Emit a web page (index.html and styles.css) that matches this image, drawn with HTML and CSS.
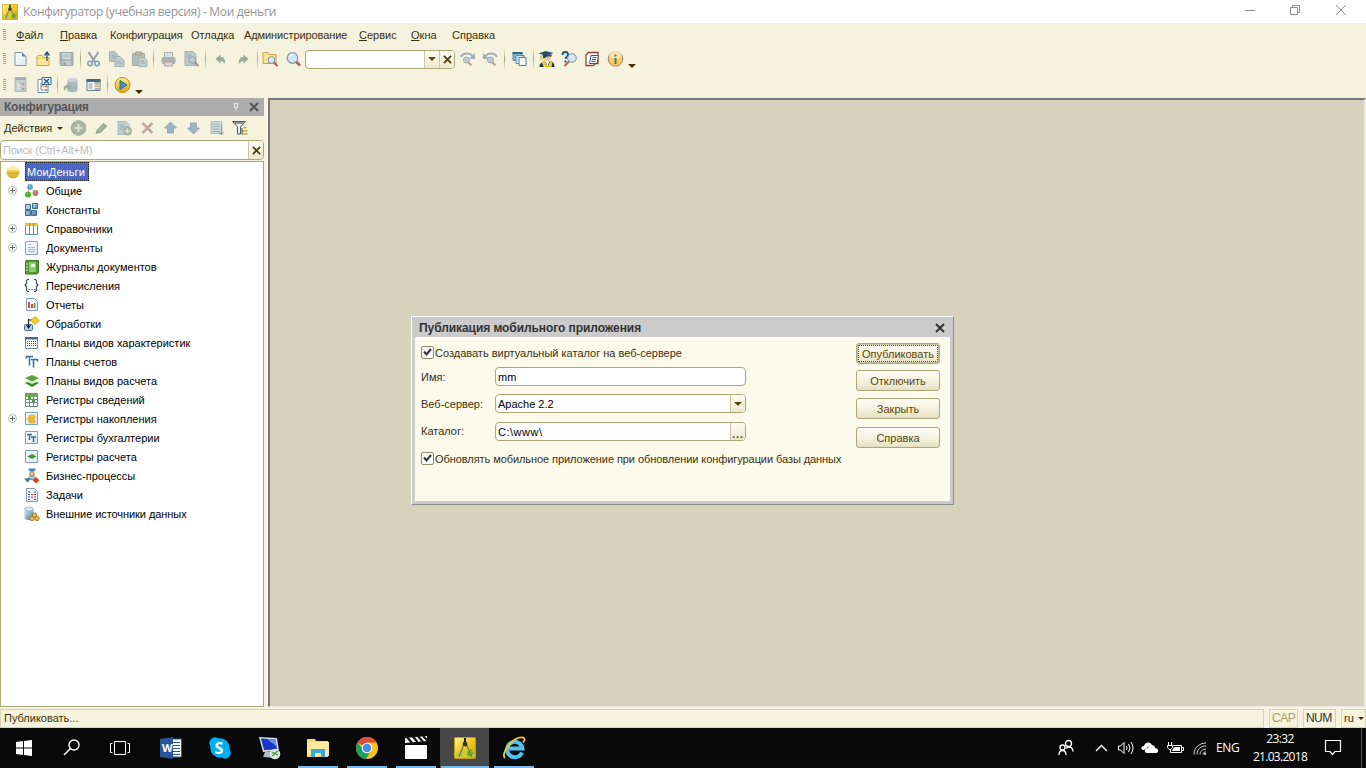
FILE: index.html
```html
<!DOCTYPE html>
<html lang="ru">
<head>
  <meta charset="UTF-8">
  <title>Конфигуратор (учебная версия) - Мои деньги</title>
  <link rel="stylesheet" href="styles.css">
</head>
<body>
  <svg class="defs" width="0" height="0">
    <defs>
      <linearGradient id="gold" x1="0" y1="0" x2="0" y2="1"><stop offset="0" stop-color="#fdf08a"/><stop offset="1" stop-color="#e0a312"/></linearGradient>
      <linearGradient id="appbg" x1="0" y1="0" x2="1" y2="1"><stop offset="0" stop-color="#fff79b"/><stop offset=".5" stop-color="#f0c81c"/><stop offset="1" stop-color="#cda50c"/></linearGradient>
      <linearGradient id="blue" x1="0" y1="0" x2="1" y2="1"><stop offset="0" stop-color="#d5e6f2"/><stop offset="1" stop-color="#4a80a8"/></linearGradient>
      <linearGradient id="paper" x1="0" y1="0" x2="1" y2="1"><stop offset="0" stop-color="#fff"/><stop offset="1" stop-color="#dbe8f2"/></linearGradient>
    </defs>
    <symbol id="app" viewBox="0 0 22 22"><rect x=".5" y=".5" width="21" height="21" rx="1" fill="url(#appbg)" stroke="#c69b10"/><path d="M2 20v-5l9-2 9 3v4z" fill="#c5d02c"/><path d="M13 15l4-3 3 4-3 4-4-1z" fill="#7fb01c"/><path d="M10 7L5 20M12 7l6 13" stroke="#777" stroke-width="1.400" fill="none"/><path d="M10 1h2v4h-2z" fill="#222"/><circle cx="11" cy="7" r="2.400" fill="#333"/></symbol>
    <symbol id="page" viewBox="0 0 16 16"><path d="M2.500 1.500h7l4 4v9h-11z" fill="url(#paper)" stroke="#7d9bb0"/><path d="M9.500 1.500v4h4z" fill="#5d89a8"/></symbol>
    <symbol id="open" viewBox="0 0 16 16"><path d="M1.500 14.500v-9l1-1h4l1 2h6v8z" fill="url(#gold)" stroke="#c9a24a"/><path d="M2 8h11v6H2z" fill="#fbe79a"/><path d="M11.500 10V2M9 4.500L11.500 1 14 4.500" fill="none" stroke="#2f5870" stroke-width="1.300"/></symbol>
    <symbol id="save" viewBox="0 0 16 16"><path d="M1.500 1.500h13v13h-12l-1-1z" fill="#a9b3b8" stroke="#9aa5ab"/><path d="M4 2h8v6H4z" fill="#d5dadb"/><path d="M5 4h6M5 6h6" stroke="#a9b3b8"/><path d="M4 10h8v4H4z" fill="#c6cccd"/><path d="M5 11h2v3H5z" fill="#8e999f"/></symbol>
    <symbol id="cut" viewBox="0 0 16 16"><path d="M3 1l6.500 10M13 1L6.500 11" stroke="#93a0a5" stroke-width="2" fill="none"/><circle cx="4.500" cy="12.500" r="2.200" fill="none" stroke="#7f9fb5" stroke-width="1.600"/><circle cx="11.500" cy="12.500" r="2.200" fill="none" stroke="#7f9fb5" stroke-width="1.600"/></symbol>
    <symbol id="copy" viewBox="0 0 16 16"><path d="M1 .5h5l3 3v7H1z" fill="#b9c6cb" stroke="#a5b4ba"/><path d="M6.500 5.500h5l4 4v6h-9z" fill="#c1cdd1" stroke="#9fb0b8"/><path d="M3 5h4M3 7h3M8 10h4M8 12h6" stroke="#98abb5"/></symbol>
    <symbol id="paste" viewBox="0 0 16 16"><path d="M1 2.500h12v12H1z" fill="#b4bcb9" stroke="#a3aca9"/><path d="M4 1h6v3H4z" fill="#c9bd96" stroke="#a79f84"/><path d="M7.500 6.500h5l3 3v6h-8z" fill="#c6d0d1" stroke="#9fb0b8"/><path d="M9 10h4M9 12h5" stroke="#98abb5"/></symbol>
    <symbol id="print" viewBox="0 0 16 16"><path d="M4 6V1.500h8V6" fill="#dde0dc" stroke="#aab1b2"/><rect x="1" y="6" width="14" height="7" rx="2" fill="#a9b0b2"/><path d="M3 9h10" stroke="#d1aa98"/><path d="M4 11h8v4H4z" fill="#d9d4cb" stroke="#a9aaa7"/></symbol>
    <symbol id="preview" viewBox="0 0 16 16"><path d="M1.500.5h8l3 3v11h-11z" fill="#c0c9cb" stroke="#a5b0b5"/><path d="M3 4h5M3 6h5" stroke="#98a7af"/><circle cx="9" cy="9" r="3.300" fill="#b9ccd6" stroke="#8e9fa8"/><path d="M11.500 11.500L15 15" stroke="#b6897a" stroke-width="2"/></symbol>
    <symbol id="undo" viewBox="0 0 16 16"><path d="M3 8l5-4.500V6c4 0 5 3 4.500 7C11.500 11 10 10 8 10v2.500z" fill="#96aa9c"/></symbol>
    <symbol id="redo" viewBox="0 0 16 16"><path d="M13 8L8 3.500V6c-4 0-5 3-4.500 7C4.500 11 6 10 8 10v2.500z" fill="#96aa9c"/></symbol>
    <symbol id="mag" viewBox="0 0 16 16"><path d="M10.500 10.500l4 4" stroke="#a2634d" stroke-width="2.500"/><circle cx="7" cy="7" r="5.300" fill="#d3e4f6" stroke="#8995a5" stroke-width="1.200"/><path d="M4 6a3 3 0 0 1 4-2" stroke="#fff" fill="none"/></symbol>
    <symbol id="findfolder" viewBox="0 0 16 16"><path d="M.5 12.500v-11h5l1 2h7v9z" fill="#f9e596" stroke="#cba345"/><circle cx="9" cy="9" r="3.400" fill="#d8e7f1" stroke="#7f93a1"/><path d="M11.500 11.500L15 15" stroke="#a2634d" stroke-width="2"/></symbol>
    <symbol id="next" viewBox="0 0 16 16"><path d="M1.500 6C3 2 10 1 13 5" fill="none" stroke="#9db0b8" stroke-width="2"/><path d="M15.500 2v6h-6z" fill="#9db0b8"/><circle cx="7" cy="9" r="3" fill="#c0c9d4" stroke="#a4a9b2"/><path d="M9 11.500l3 3" stroke="#bd9c91" stroke-width="2"/></symbol>
    <symbol id="prev" viewBox="0 0 16 16"><path d="M14.500 6C13 2 6 1 3 5" fill="none" stroke="#9db0b8" stroke-width="2"/><path d="M.5 2v6h6z" fill="#9db0b8"/><circle cx="8" cy="9" r="3" fill="#c0c9d4" stroke="#a4a9b2"/><path d="M10 11.500l3 3" stroke="#bd9c91" stroke-width="2"/></symbol>
    <symbol id="windows" viewBox="0 0 16 16"><path d="M1.500 1.500h9v8h-9z" fill="#8fb4cb" stroke="#4f83a5"/><path d="M1 1h10v2H1z" fill="#2f6d93"/><path d="M4.500 4.500h8v8h-8z" fill="#d3e2ec" stroke="#5d8ba8"/><path d="M7.500 6.500h7v8h-7z" fill="#f4f8fb" stroke="#4f83a5"/></symbol>
    <symbol id="grad" viewBox="0 0 16 16"><circle cx="9" cy="6.500" r="3.300" fill="#f0c29a"/><path d="M0 2.500L7 0l8 2-6 3z" fill="#24536e"/><path d="M4 3.500l6 1 3-1v2H8L5 8z" fill="#173e57"/><path d="M2.500 4v5" stroke="#c6921b"/><path d="M1 16c0-4 3-5 5-6l3 2 3-2c3 1 4 3 4 6z" fill="#17344a"/><path d="M6 9l3 7H5l-2-5zM12 10l-3 6h4l1-5z" fill="#f0ca29"/><path d="M7 10h4l-2 6z" fill="#fff"/></symbol>
    <symbol id="qmag" viewBox="0 0 16 16"><path d="M1 4c0-4 5.500-4 5.500-.5C6.500 6 4 5.500 4 8M4 9.500v2" stroke="#1c5877" stroke-width="2" fill="none"/><circle cx="10.500" cy="7" r="4.300" fill="#d5e7f3" stroke="#778e9d"/><path d="M7.500 10.500L3 15" stroke="#b2694f" stroke-width="2.200"/></symbol>
    <symbol id="book" viewBox="0 0 16 16"><path d="M4 1.500h9.500v11H11l-2 2H1.500V4z" fill="#fff" stroke="#8e4431" stroke-width="1.300"/><path d="M6.500 4.500h7.500l-1.500 8H5z" fill="#fff" stroke="#2b5c7c"/><path d="M8 6.500h4" stroke="#d33"/><path d="M7.500 8.500h4M7 10.500h4" stroke="#2b4c9c"/></symbol>
    <symbol id="info" viewBox="0 0 16 16"><circle cx="8" cy="8" r="7.300" fill="#fbc76d" stroke="#a3896b"/><path d="M2 6a6 6 0 0 1 12 0c-4 2-8 2-12 0z" fill="#fde6b8"/><path d="M7 7h2v6H7zM7 3.500h2v2H7z" fill="#4d8030"/></symbol>
    <symbol id="cfg" viewBox="0 0 16 16"><path d="M2.500.5h11v14h-11z" fill="#c5ced0" stroke="#aeb9bc"/><path d="M3 1h10v2H3z" fill="#a2adb2"/><path d="M5.500 5v7h3M5.500 8h3" stroke="#eee" fill="none"/><path d="M9 7h3M9 12h3" stroke="#b4978d" stroke-width="1.500"/></symbol>
    <symbol id="cfgx" viewBox="0 0 16 16"><path d="M2.500 2.500h10v13h-10z" fill="#fff" stroke="#6c8da4"/><path d="M5.500 6v7h3M5.500 9h3" stroke="#a57c68" fill="none"/><path d="M9 9.500h3M9 13h3" stroke="#b36e51" stroke-width="1.500"/><path d="M6.500.5h9v7h-9z" fill="#e8f1f6" stroke="#336f95"/><path d="M8.500 2l5 4.500M13.500 2l-5 4.500" stroke="#1f5f87" stroke-width="1.500"/></symbol>
    <symbol id="db" viewBox="0 0 16 16"><path d="M5 3v10c0 3 10 3 10 0V3z" fill="#a6b8c1"/><ellipse cx="10" cy="3" rx="5" ry="2" fill="#c6d2d6"/><path d="M2 14c-2-4 0-6 3-6V6l4 4-4 4v-3c-2 0-2 1-3 3z" fill="#9cae9a"/></symbol>
    <symbol id="props" viewBox="0 0 16 16"><path d="M1.500 2.500h13v11h-13z" fill="#fff" stroke="#5f8096"/><path d="M1 2h14v3H1z" fill="#376b8b"/><path d="M3 7h4M3 9h4M3 11h4" stroke="#6e8da1"/><path d="M9 5h5v8H9z" fill="#bdae9f"/><path d="M9 8h5M9 10.500h5" stroke="#f1e9dd"/></symbol>
    <symbol id="run" viewBox="0 0 16 16"><circle cx="8" cy="8" r="7.500" fill="url(#gold)" stroke="#bd8c1b"/><path d="M5.500 3.500l7 4.500-7 4.500z" fill="#4a92be" stroke="#286b93"/></symbol>
    <symbol id="add" viewBox="0 0 16 16"><circle cx="8" cy="8" r="7.300" fill="#a9b7a2" stroke="#9cab96"/><path d="M8 4v8M4 8h8" stroke="#dce1d0" stroke-width="2"/></symbol>
    <symbol id="edit" viewBox="0 0 16 16"><path d="M3 10l7-7 4 3-7 7-5 1z" fill="#98aa91"/><path d="M10 6l-5 5" stroke="#c2cdb8"/></symbol>
    <symbol id="addpage" viewBox="0 0 16 16"><path d="M1.500 1.500h8l3 3v10h-11z" fill="#c2cdd0" stroke="#aebabf"/><path d="M3 5h5M3 7h6M3 9h4" stroke="#9eb0b8"/><circle cx="11" cy="11" r="4.500" fill="#a5b59d"/><path d="M11 8.500v5M8.500 11h5" stroke="#e1e5d5" stroke-width="1.500"/></symbol>
    <symbol id="del" viewBox="0 0 16 16"><path d="M3 3l10 10M13 3L3 13" stroke="#c2a7a0" stroke-width="2.600"/></symbol>
    <symbol id="up" viewBox="0 0 16 16"><path d="M8 2l6 6h-3v5H5V8H2z" fill="#9db3c2" stroke="#90a6b5"/></symbol>
    <symbol id="down" viewBox="0 0 16 16"><path d="M8 14l6-6h-3V3H5v5H2z" fill="#9db3c2" stroke="#90a6b5"/></symbol>
    <symbol id="sort" viewBox="0 0 16 16"><path d="M2.500 1.500h11v12h-11z" fill="#d0d7d6" stroke="#b0bcbf"/><path d="M4 4h7M4 6.500h7M4 9h7M4 11.500h7" stroke="#a0afb5"/><path d="M13 5v9M11 12l2 3 2-3" stroke="#8ca0aa" fill="none"/></symbol>
    <symbol id="filter" viewBox="0 0 16 16"><path d="M1 1.500h13L9 7v7H6V7z" fill="#e9eef0" stroke="#555"/><path d="M2 2h11l-2 2H4z" fill="#8b9397"/><path d="M10.500 8v6h2M10.500 11h2" stroke="#555" fill="none"/><path d="M12 7h3v1.500h-3zM13 10h3v1.500h-3zM13 13h3v1.500h-3z" fill="#c8a322"/></symbol>
    <symbol id="root" viewBox="0 0 16 16"><circle cx="8" cy="8" r="6.500" fill="url(#gold)"/><path d="M3 6a5 5 0 0 1 10 0z" fill="#fdf3b6"/><path d="M2 9h12" stroke="#c48e15" stroke-width=".7"/></symbol>
    <symbol id="common" viewBox="0 0 16 16"><path d="M5 4l-1 7M6 4l6 7" stroke="#999" stroke-width=".7"/><circle cx="6" cy="4" r="2.900" fill="#5aa5d2"/><circle cx="4" cy="11.500" r="3" fill="#4eae27"/><circle cx="11.500" cy="10" r="2.900" fill="#b57d5f"/><path d="M5 3h1M3 10.500h1M10.500 9h1" stroke="#fff"/></symbol>
    <symbol id="const" viewBox="0 0 16 16"><g fill="url(#blue)" stroke="#386d92"><path d="M1.500 2.500h5v5h-5zM1.500 8.500h5v5h-5zM7.500 8.500h5v5h-5z"/><path d="M8.500 1.500h5v5h-5z"/></g></symbol>
    <symbol id="catalog" viewBox="0 0 16 16"><path d="M1.500 2.500h12v11h-12z" fill="#fff" stroke="#668aa2"/><path d="M1 2h13v3H1z" fill="#f0c42e"/><path d="M5.500 2v11M9.500 2v11" stroke="#668aa2"/></symbol>
    <symbol id="doc" viewBox="0 0 16 16"><path d="M1.500 1.500h12v13h-12z" fill="url(#paper)" stroke="#8aa3b5"/><path d="M4 4.500h3M4 7.500h7M4 9.500h7M4 11.500h7" stroke="#a7b8c5"/></symbol>
    <symbol id="journal" viewBox="0 0 16 16"><path d="M2 1.500h12.500v12l-2 1.500H1.500V2z" fill="#4b9a34" stroke="#39772a"/><path d="M5 3h7v10H5z" fill="#8dc871"/><path d="M7 5h4v3H7z" fill="#e5f3dc"/><path d="M2 5h2M2 8h2M2 11h2" stroke="#dceecf"/></symbol>
    <symbol id="enum" viewBox="0 0 16 16"><path d="M5 1.500H3.500l-1 1v3L1 7l1.500 1.500v4l1 1H5M10 1.500h1.500l1 1v3L14 7l-1.500 1.500v4l-1 1H10" fill="none" stroke="#315b73" stroke-width="1.200"/><path d="M4.500 11.500h7" stroke="#315b73" stroke-width="1.200" stroke-dasharray="1.400 1.400"/></symbol>
    <symbol id="report" viewBox="0 0 16 16"><path d="M2.500 1.500h8l3 3v9h-11z" fill="url(#paper)" stroke="#809db0"/><path d="M5 5v6M8 7v4" stroke="#cf3929" stroke-width="1.700"/><path d="M10.500 6v5" stroke="#409b3a" stroke-width="1.500"/></symbol>
    <symbol id="process" viewBox="0 0 16 16"><rect x=".5" y="8.500" width="8" height="6" rx="1" fill="#b5d2e6" stroke="#3c7296"/><path d="M4.500 3v8M2.500 9l2 3 2-3M4.500 4H8" stroke="#222" fill="none" stroke-width="1.200"/><path d="M11 .5l4 4-4 4-4-4z" fill="#f4d226" stroke="#c8a117"/></symbol>
    <symbol id="chars" viewBox="0 0 16 16"><path d="M1.500 2.500h12v11h-12z" fill="#fff" stroke="#71899a"/><path d="M1 2h13v2.500H1z" fill="#3f6d8b"/><path d="M3 6.500h9M3 8.500h9M3 10.500h9" stroke="#555" stroke-dasharray="1 1"/></symbol>
    <symbol id="accounts" viewBox="0 0 16 16"><path d="M2 2.500h7M5.500 2.500v9M2.500 2v2.500M7 5.500h6.500M9.500 5.500v8M13.500 5v2.500" stroke="#2f7099" stroke-width="1.500" fill="none"/></symbol>
    <symbol id="calc" viewBox="0 0 16 16"><path d="M8 7l7 3-7 4-7-4z" fill="#3b8b25"/><path d="M8 5l7 3-7 3-7-3z" fill="#e5edda"/><path d="M8 2l7 3-7 3.500L1 5z" fill="#57a83a"/></symbol>
    <symbol id="inforeg" viewBox="0 0 16 16"><path d="M1.500 1.500h12v13h-12z" fill="#fff" stroke="#648a9d"/><path d="M2 2h11v3H2z" fill="#77ad5c"/><path d="M2 7.500h11M2 10.500h11M5.500 2v12M9.500 2v12" stroke="#6a8693"/><path d="M4 5h3v2H4zM8 8h3v2H8z" fill="#559842"/></symbol>
    <symbol id="accum" viewBox="0 0 16 16"><path d="M1.500 1.500h12v12h-12z" fill="url(#paper)" stroke="#7d9db4"/><g fill="#f4c32f" stroke="#c8931c" stroke-width=".6"><ellipse cx="8" cy="10.500" rx="3.500" ry="1.600"/><ellipse cx="7" cy="8" rx="3.500" ry="1.600"/><ellipse cx="8" cy="5.500" rx="3.500" ry="1.600"/></g></symbol>
    <symbol id="accreg" viewBox="0 0 16 16"><path d="M1.500 1.500h12v12h-12z" fill="url(#paper)" stroke="#7d9db4"/><path d="M3 4.500h5M5.500 4v6M7 7h5M9.500 7v5" stroke="#2f7099" stroke-width="1.500" fill="none"/></symbol>
    <symbol id="calcreg" viewBox="0 0 16 16"><path d="M1.500 1.500h12v12h-12z" fill="url(#paper)" stroke="#7d9db4"/><path d="M8 5l4.500 2.500L8 10 3 7.500z" fill="#429731"/></symbol>
    <symbol id="bp" viewBox="0 0 16 16"><path d="M4 .5h8l-2 3H6z" fill="#3b86b6"/><path d="M8 8v3M3 11h10" stroke="#666"/><path d="M4.500 11c0-4 7-4 7 0z" fill="#c7e0ef" stroke="#60839c"/><circle cx="8" cy="6" r="2.300" fill="#f2c88f" stroke="#93785b"/><path d="M0 10.500h7l-3.500 4z" fill="#3b759a"/><path d="M12 9l3.500 3.300L12 15.500 8.500 12.300z" fill="#df4029"/></symbol>
    <symbol id="task" viewBox="0 0 16 16"><path d="M2.500 1.500h8l3 3v10h-11z" fill="url(#paper)" stroke="#809db0"/><path d="M4 5h2M4 7.500h2M4 10h2M4 12.500h2" stroke="#456"/><path d="M7 7.500h2M7 10h2" stroke="#c43828"/><path d="M10 5h2M10 7.500h2M10 10h2M10 12.500h2" stroke="#456"/></symbol>
    <symbol id="ext" viewBox="0 0 16 16"><path d="M.5 3v9c0 3 9 3 9 0V3z" fill="url(#blue)"/><ellipse cx="5" cy="3" rx="4.500" ry="2" fill="#d5e7f3" stroke="#6f9cbb" stroke-width=".6"/><g fill="#edbd54" stroke="#996b20" stroke-width=".8"><circle cx="10.500" cy="9" r="2.200"/><circle cx="8" cy="12.500" r="2.200"/><circle cx="13" cy="12.500" r="2.200"/></g></symbol>
    <symbol id="plus" viewBox="0 0 9 9"><circle cx="4.500" cy="4.500" r="4" fill="#fff" stroke="#b5b5b5"/><path d="M2 4.500h5M4.500 2v5" stroke="#666"/></symbol>
    <symbol id="tick" viewBox="0 0 9 9"><path d="M1 3.500l2.500 3L8 1" stroke="#333" stroke-width="2" fill="none"/></symbol>
    <symbol id="x" viewBox="0 0 10 10"><path d="M1 1l8 8M9 1L1 9" stroke="currentColor" stroke-width="2" fill="none"/></symbol>
  </svg>

  <header class="titlebar">
    <svg class="app-icon"><use href="#app"/></svg>
    <span class="title">Конфигуратор (учебная версия) - Мои деньги</span>
    <svg class="winctl" width="104" height="12" fill="none" stroke="#8c8c8c"><path d="M1 6.500h10M46.500 3.500h7v7h-7zM48.500 3.500v-2h7v7h-2M92 1l10 10M102 1L92 11"/></svg>
  </header>

  <nav class="menu">
    <i class="grip"></i>
    <span class="m1"><u>Ф</u>айл</span><span class="m2"><u>П</u>равка</span><span class="m3">Конфигурация</span><span class="m4">Отладка</span><span class="m5">Администрирование</span><span class="m6"><u>С</u>ервис</span><span class="m7"><u>О</u>кна</span><span class="m8">Сп<u>р</u>авка</span>
  </nav>

  <div class="toolbar">
    <i class="grip"></i>
    <svg class="tb"><use href="#page"/></svg>
    <svg class="tb"><use href="#open"/></svg>
    <svg class="tb"><use href="#save"/></svg>
    <i class="sep narrow"></i>
    <svg class="tb"><use href="#cut"/></svg>
    <svg class="tb"><use href="#copy"/></svg>
    <svg class="tb"><use href="#paste"/></svg>
    <i class="sep"></i>
    <svg class="tb"><use href="#print"/></svg>
    <svg class="tb"><use href="#preview"/></svg>
    <i class="sep"></i>
    <svg class="tb"><use href="#undo"/></svg>
    <svg class="tb"><use href="#redo"/></svg>
    <i class="sep narrow"></i>
    <svg class="tb"><use href="#findfolder"/></svg>
    <svg class="tb"><use href="#mag"/></svg>
    <div class="field find"><b class="fbtn"><i class="caret"></i></b><b class="fbtn"><svg class="x8"><use href="#x"/></svg></b></div>
    <svg class="tb"><use href="#next"/></svg>
    <svg class="tb"><use href="#prev"/></svg>
    <i class="sep"></i>
    <svg class="tb"><use href="#windows"/></svg>
    <i class="sep narrow"></i>
    <svg class="tb"><use href="#grad"/></svg>
    <svg class="tb"><use href="#qmag"/></svg>
    <svg class="tb"><use href="#book"/></svg>
    <svg class="tb"><use href="#info"/></svg>
    <i class="caret more"></i>
  </div>
  <div class="toolbar second">
    <i class="grip"></i>
    <svg class="tb"><use href="#cfg"/></svg>
    <svg class="tb"><use href="#cfgx"/></svg>
    <i class="sep narrow"></i>
    <svg class="tb"><use href="#db"/></svg>
    <svg class="tb"><use href="#props"/></svg>
    <i class="sep"></i>
    <svg class="tb"><use href="#run"/></svg>
    <i class="caret more"></i>
  </div>

  <main class="main">
    <aside class="panel">
      <div class="panel-head">
        <span>Конфигурация</span>
        <svg class="pin" width="6" height="8"><path d="M1.500.5h3v4h-3zM3 5v2.500" fill="none" stroke="#eee"/></svg>
        <svg class="x10"><use href="#x"/></svg>
      </div>
      <div class="actions">
        <span>Действия</span><i class="caret small"></i>
        <svg class="tb"><use href="#add"/></svg>
        <svg class="tb"><use href="#edit"/></svg>
        <svg class="tb"><use href="#addpage"/></svg>
        <svg class="tb"><use href="#del"/></svg>
        <svg class="tb"><use href="#up"/></svg>
        <svg class="tb"><use href="#down"/></svg>
        <svg class="tb"><use href="#sort"/></svg>
        <svg class="tb"><use href="#filter"/></svg>
      </div>
      <div class="field search"><span>Поиск (Ctrl+Alt+M)</span><b class="fbtn"><svg class="x8"><use href="#x"/></svg></b></div>
      <ul class="tree">
        <li class="top"><svg><use href="#root"/></svg><span class="selected">МоиДеньги</span></li>
        <li class="has"><svg class="plus"><use href="#plus"/></svg><svg><use href="#common"/></svg><span>Общие</span></li>
        <li><svg><use href="#const"/></svg><span>Константы</span></li>
        <li class="has"><svg class="plus"><use href="#plus"/></svg><svg><use href="#catalog"/></svg><span>Справочники</span></li>
        <li class="has"><svg class="plus"><use href="#plus"/></svg><svg><use href="#doc"/></svg><span>Документы</span></li>
        <li><svg><use href="#journal"/></svg><span>Журналы документов</span></li>
        <li><svg><use href="#enum"/></svg><span>Перечисления</span></li>
        <li><svg><use href="#report"/></svg><span>Отчеты</span></li>
        <li><svg><use href="#process"/></svg><span>Обработки</span></li>
        <li><svg><use href="#chars"/></svg><span>Планы видов характеристик</span></li>
        <li><svg><use href="#accounts"/></svg><span>Планы счетов</span></li>
        <li><svg><use href="#calc"/></svg><span>Планы видов расчета</span></li>
        <li><svg><use href="#inforeg"/></svg><span>Регистры сведений</span></li>
        <li class="has"><svg class="plus"><use href="#plus"/></svg><svg><use href="#accum"/></svg><span>Регистры накопления</span></li>
        <li><svg><use href="#accreg"/></svg><span>Регистры бухгалтерии</span></li>
        <li><svg><use href="#calcreg"/></svg><span>Регистры расчета</span></li>
        <li><svg><use href="#bp"/></svg><span>Бизнес-процессы</span></li>
        <li><svg><use href="#task"/></svg><span>Задачи</span></li>
        <li><svg><use href="#ext"/></svg><span class="tight">Внешние источники данных</span></li>
      </ul>
    </aside>
    <section class="workspace"></section>

    <div class="dialog">
      <div class="dialog-head"><span>Публикация мобильного приложения</span><svg class="x10"><use href="#x"/></svg></div>
      <div class="dialog-body">
        <div class="form">
          <label class="check"><i class="box"><svg><use href="#tick"/></svg></i><span>Создавать виртуальный каталог на веб-сервере</span></label>
          <div class="row"><span class="lbl">Имя:</span><div class="field"><span>mm</span></div></div>
          <div class="row"><span class="lbl">Веб-сервер:</span><div class="field"><span>Apache 2.2</span><b class="fbtn"><i class="caret"></i></b></div></div>
          <div class="row last"><span class="lbl">Каталог:</span><div class="field"><span class="path">C:\www\</span><b class="fbtn dots">...</b></div></div>
          <label class="check"><i class="box"><svg><use href="#tick"/></svg></i><span class="tight">Обновлять мобильное приложение при обновлении конфигурации базы данных</span></label>
        </div>
        <div class="buttons">
          <button class="focus">Опубликовать</button>
          <button>Отключить</button>
          <button>Закрыть</button>
          <button>Справка</button>
        </div>
      </div>
    </div>
  </main>

  <footer class="status">
    <span class="msg">Публиковать...</span><span class="cap">CAP</span><span class="num">NUM</span><span class="lang">ru<i class="caret small"></i></span>
  </footer>

  <div class="taskbar">
    <div class="task start"><svg width="16" height="16" fill="#fff"><path d="M0 2l7-1v6.500H0zM8 1l8-1v7.500H8zM0 8.500h7V15l-7-1zM8 8.500h8V16l-8-1z"/></svg></div>
    <div class="task"><svg width="18" height="18" fill="none" stroke="#fff" stroke-width="1.400"><circle cx="11" cy="6" r="5"/><path d="M7.500 9.500L1 16"/></svg></div>
    <div class="task"><svg width="22" height="16" fill="none" stroke="#fff"><path d="M5.500 1.500h11v13h-11zM3.500 3.500h-2v9h2M18.500 3.500h2v9h-2"/></svg></div>
    <div class="task wide"><svg width="24" height="24"><path d="M12 3h10.500v18H12z" fill="#fff" stroke="#2a5699"/><path d="M14 6.500h7M14 9.500h7M14 12.500h7M14 15.500h7M14 18.500h7" stroke="#2a5699"/><path d="M1 3l13-2v22L1 21z" fill="#2a5699"/><text x="3" y="16" fill="#fff" class="logo-w">W</text></svg></div>
    <div class="task wide"><svg width="24" height="24"><circle cx="12" cy="12" r="9.700" fill="#00aff0"/><circle cx="7" cy="7" r="5.800" fill="#00aff0"/><circle cx="17" cy="17" r="5.800" fill="#00aff0"/><text x="6.500" y="18" fill="#fff" class="logo-s">S</text></svg></div>
    <div class="task wide"><svg width="24" height="24"><path d="M2 1l18 1 2 13-16 1z" fill="#d5dbe2"/><path d="M4 2.500l14.500 1L20 13.500l-13 .5z" fill="#1735c8"/><path d="M10 3l8.500.5 1 7z" fill="#6c8bf0"/><path d="M8 16h7l3 6-12-1z" fill="#b5bbc3"/><circle cx="18" cy="18" r="5.300" fill="#e2e6e0"/><path d="M15 16l3 2-3 2M21 15l-3 2 3 2" stroke="#3c9b35" stroke-width="1.200" fill="none"/></svg></div>
    <div class="task wide open"><svg width="24" height="24"><path d="M1 4V3h8l1 2h12v16H1z" fill="#f7d774"/><path d="M1 6h22v14H1z" fill="#ffe79c"/><path d="M5 21v-8h14v8h-4v-4H9v4z" fill="#35a9dd"/></svg></div>
    <div class="task wide open"><svg width="24" height="24"><circle cx="12" cy="12" r="11" fill="#fbc116"/><path d="M12 12L2.500 6.500A11 11 0 0 1 21.500 6.500H12z" fill="#dd4b3e"/><path d="M2.500 6.500A11 11 0 0 0 11 23l5-8.500-4-1-4-.5z" fill="#1a9f5c"/><circle cx="12" cy="12" r="5.300" fill="#fff"/><circle cx="12" cy="12" r="4.200" fill="#4688f1"/></svg></div>
    <div class="task wide open"><svg width="24" height="24"><path d="M1 9h22v14H1z" fill="#fff"/><path d="M1 2l22-2v5L1 7z" fill="#fff"/><path d="M3 1l5 6M8.500 0l5 6M14 0l5 6M19 0l5 5" stroke="#111" stroke-width="2.200"/></svg></div>
    <div class="task wide open active"><svg width="22" height="22"><use href="#app"/></svg></div>
    <div class="task wide open"><svg width="24" height="24"><path d="M20 16.500A7.700 7.700 0 1 1 20.500 12.500H7" fill="none" stroke="#4fc4f4" stroke-width="4"/><path d="M3 22C-2 18 11 0 21 1.500c3 1 1 4 0 5" fill="none" stroke="#f2c32d" stroke-width="1.800"/></svg></div>
    <div class="tray">
      <svg width="18" height="18" fill="none" stroke="#fff" stroke-width="1.300"><circle cx="11.500" cy="4.500" r="3"/><circle cx="5.500" cy="8.500" r="2.500"/><path d="M2 16c0-6 7-6 7 0M9 9.500c3-3 7-1 7 3"/></svg>
      <svg class="t2" width="13" height="8" fill="none" stroke="#fff" stroke-width="1.300"><path d="M1 7l5.500-5.500L12 7"/></svg>
      <svg class="t3" width="18" height="14" fill="none" stroke="#fff"><path d="M1.500 5v4h2l3.500 3.500v-11L3.500 5zM9.500 5q1 2 0 4M11.500 3q3 4 0 8M14 1q4 6 0 12"/></svg>
      <svg class="t4" width="18" height="12" fill="#fff"><path d="M3 8C-1 8 0 4 3 4c1-4 6-5 8-1L7 5z"/><path d="M6 11c-3 0-3-5 1-5 1-4 7-4 7 0 4 0 4 5 1 5z"/></svg>
      <svg class="t5" width="18" height="13" fill="none" stroke="#fff"><path d="M7 3.500h8.500v7H4.500V8M15.500 5.500h2v3h-2M2.500 0v3M5.500 0v3M1.500 3.500h5v2l-1.500 2h-2l-1.500-2z"/><path d="M8 5h6v4H6z" fill="#fff" stroke="none"/></svg>
      <svg class="t6" width="14" height="13" fill="none" stroke="#ddd"><path d="M1 12.500C1 5 7 1 13 1M4 12.500C4 7 8 4 13 4M7 12.500C7 9 10 7 13 7M10 12.500c0-2 1-2.500 3-2.500"/><circle cx="12" cy="12" r="1" fill="#fff" stroke="none"/></svg>
      <span class="eng">ENG</span>
      <div class="clock"><span>23:32</span><span class="date">21.03.2018</span></div>
      <svg class="t7" width="18" height="18" fill="none" stroke="#fff" stroke-width="1.200"><path d="M1.500 1.500h15v11H11l-2.500 3-2.500-3H1.500z"/></svg>
    </div>
  </div>
</body>
</html>
```

FILE: styles.css
```css
* { box-sizing: border-box; }
body { margin: 0; width: 1366px; height: 768px; overflow: hidden; display: flex; flex-direction: column; background: #f5f2dd; color: #3b2f0b; font: 11px/14px "Liberation Sans", Arial, sans-serif; }
svg { display: block; flex: none; }
i { display: block; flex: none; font-style: normal; }
span { white-space: nowrap; }
.defs { position: absolute; }
.tight { letter-spacing: -.07px; }

.titlebar { height: 23px; background: #fff; display: flex; align-items: center; padding-left: 2px; }
.app-icon { width: 16px; height: 16px; margin-right: 5px; }
.title { font: 12px/16px "Open Sans", sans-serif; letter-spacing: -.31px; color: #939393; }
.winctl { margin: 0 18px 3px auto; }

.menu { height: 24px; display: flex; align-items: center; }
.menu span { margin-right: 8px; }
.menu u { text-underline-offset: 1px; }
.menu .m1 { width: 36px; margin-left: 8px; }
.menu .m2 { width: 42px; }
.menu .m3 { width: 73px; letter-spacing: -.1px; }
.menu .m4 { width: 45px; }
.menu .m5 { width: 107px; letter-spacing: -.1px; }
.menu .m6 { width: 44px; }
.menu .m7 { width: 33px; }

.grip { width: 3px; height: 12px; margin: 0 2px 0 3px; background: repeating-linear-gradient(#a9a179 0 1px, transparent 1px 2px); }
.toolbar { height: 26px; display: flex; align-items: center; padding-bottom: 2px; }
.toolbar .grip { margin-right: 3px; }
.toolbar.second { height: 25px; }
.tb { width: 23px; height: 16px; }
.sep { width: 6px; height: 22px; background: linear-gradient(transparent, #a8a27c 50%, transparent) 2px 0 / 1px 100% no-repeat; }
.sep.narrow { width: 4px; }
.caret { width: 0; height: 0; border: 4px solid transparent; border-top-color: #5b4706; border-bottom: 0; }
.caret.small { border-width: 3px; border-bottom: 0; border-top-color: #3b2f0b; }
.caret.more { margin: 14px 0 0 1px; border-top-color: #3b2f0b; }
.x8 { width: 9px; height: 9px; color: #4d3d08; }
.x10 { width: 10px; height: 10px; }

.field { height: 19px; display: flex; align-items: stretch; background: #fff; border: 1px solid #ada678; border-radius: 4px; color: #000; overflow: hidden; }
.field > span { flex: 1; padding: 2px 0 0 2px; }
.fbtn { width: 15px; display: flex; align-items: center; justify-content: center; border-left: 1px solid #ccc6a2; background: linear-gradient(#fdfcf3, #ece8cf); }
.find { width: 150px; margin: 0 1px 0 0; justify-content: flex-end; }

.main { height: 609px; display: flex; position: relative; }
.panel { width: 264px; display: flex; flex-direction: column; }
.panel-head { height: 18px; background: #adadad; color: #555; display: flex; align-items: center; padding: 0 5px 0 4px; font-weight: bold; font-size: 12px; letter-spacing: -.2px; }
.pin { margin: 0 10px 0 auto; }
.actions { height: 24px; display: flex; align-items: center; padding-left: 4px; }
.actions .caret { margin: 0 4px 0 5px; }
.search { height: 20px; color: #bbb; letter-spacing: -.2px; }
.search span { padding-top: 2px; }
.tree { flex: 1; margin: 1px 0 0; padding: 0; list-style: none; background: #fff; border: 1px solid #ada678; color: #000; }
.tree li { height: 19px; display: flex; align-items: center; padding-left: 23px; }
.tree svg { width: 16px; height: 16px; margin-right: 6px; }
.tree .has { padding-left: 7px; }
.tree .plus { width: 9px; height: 9px; margin-right: 7px; }
.tree .top { padding-left: 4px; }
.tree .top svg { margin-right: 4px; }
.tree .selected { height: 19px; width: 64px; padding: 3px 2px; letter-spacing: .1px; background: #4a68c2; color: #fff; outline: 1px dotted #222; outline-offset: -1px; }
.workspace { flex: 1; margin-left: 4px; background: #d8d2bc; border: 2px solid #77777a; border-right: 2px solid #eceae4; border-bottom: 1px solid #eceae4; }

.dialog { position: absolute; left: 411px; top: 218px; width: 543px; height: 189px; padding: 0 3px 3px; background: #cbcbcb; border: 1px solid #fff; border-right-color: #8d8d8d; border-bottom-color: #8d8d8d; }
.dialog-head { height: 20px; display: flex; align-items: center; justify-content: space-between; padding: 2px 5px 0 4px; color: #333; font-weight: bold; font-size: 12px; letter-spacing: -.07px; }
.dialog-body { height: 164px; display: flex; justify-content: space-between; padding: 6px 10px 0 6px; background: #fcfaeb; }
.form { padding-top: 3px; width: 426px; }
.check { height: 13px; display: flex; align-items: center; gap: 1px; }
.box { width: 13px; height: 13px; background: #fff; border: 1px solid #8f8a68; border-radius: 2px; padding: 1px; }
.box svg { width: 9px; height: 9px; }
.row { display: flex; margin-top: 8px; align-items: center; }
.row .lbl { width: 74px; }
.row .field { width: 251px; }
.row.last { margin-top: 9px; margin-bottom: 11px; }
.row.last .lbl { padding-bottom: 1px; }
.field .path { letter-spacing: .5px; }
.dots { padding-top: 5px; color: #5b4706; letter-spacing: 1px; }
.buttons { width: 84px; display: flex; flex-direction: column; gap: 7px; }
button { height: 21px; padding: 0; border: 1px solid #ada678; border-radius: 3px; background: linear-gradient(#fffef8, #f3efda 60%, #e6e0c2); color: #5b4706; font: inherit; }
.focus { margin-bottom: -1px; outline: 1px dotted #444; outline-offset: -3px; box-shadow: inset 0 0 0 1px #cdc7a4; }
button:last-child { margin-top: 1px; }

.status { height: 21px; display: flex; align-items: center; gap: 5px; padding-top: 1px; }
.status span { height: 19px; border: 1px solid #d8d3b4; padding: 1px 2px 0; }
.status .msg { flex: 1; padding-left: 3px; }
.status .cap { width: 29px; color: #a99e6c; font-size: 12px; letter-spacing: -.5px; }
.status .num { width: 33px; color: #333; font-size: 12px; letter-spacing: -.6px; }
.status .lang { width: 25px; display: flex; }
.status .caret { margin: 6px 0 0 4px; }

.taskbar { height: 40px; display: flex; background: #090909; color: #fff; }
.task { width: 48px; display: flex; align-items: center; justify-content: center; }
.task.wide { width: 49px; }
.task.wide.open { background: linear-gradient(#76b9ed, #76b9ed) 50% 100% / 40px 2px no-repeat; }
.task.wide.active { background: linear-gradient(#76b9ed, #76b9ed) 50% 100% / 48px 2px no-repeat, #474747; }
.task:nth-child(4) { margin-left: 2px; }
.logo-w { font: bold 11px "Open Sans", sans-serif; }
.logo-s { font: bold 16px "Open Sans", sans-serif; }
.tray { flex: 1; display: flex; align-items: center; justify-content: flex-end; margin-right: 4px; padding-right: 19px; border-right: 1px solid #555; font: 12px/18px "Open Sans", sans-serif; }
.t2 { margin-left: 20px; }
.t3 { margin-left: 9px; }
.t4 { margin-left: 6px; }
.t5 { margin-left: 7px; }
.t6 { margin-left: 9px; }
.eng { width: 24px; margin-left: 9px; letter-spacing: -.4px; }
.clock { width: 56px; display: flex; flex-direction: column; align-items: center; margin: 0 16px 0 12px; letter-spacing: -.6px; }
.clock .date { letter-spacing: -.7px; }
```
